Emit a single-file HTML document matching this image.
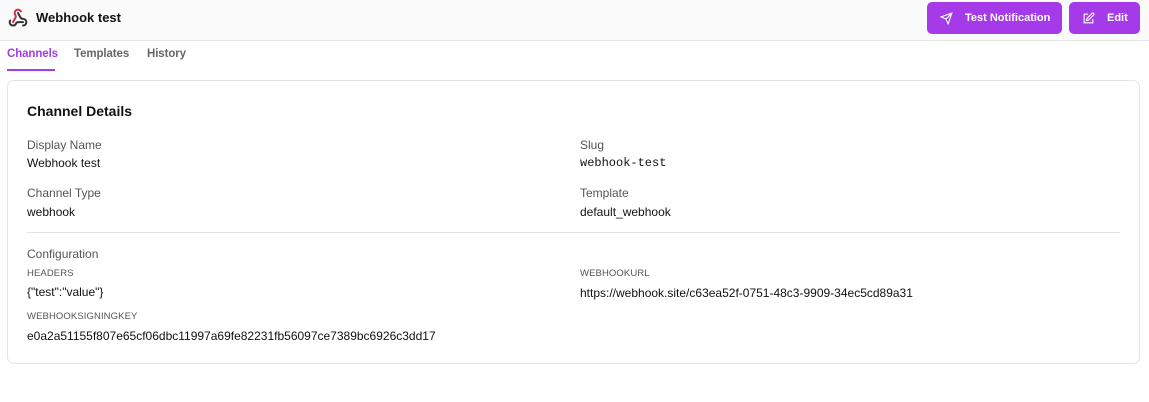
<!DOCTYPE html>
<html><head><meta charset="utf-8"><style>
*{box-sizing:border-box;margin:0;padding:0}
body{width:1149px;height:402px;background:#fff;font-family:"Liberation Sans",sans-serif;color:#111;position:relative;overflow:hidden}
.hdr{position:absolute;left:0;top:0;width:1149px;height:41px;background:#fafafa;border-bottom:1px solid #e5e5e5}
.title{position:absolute;left:36px;top:10px;font-size:13px;font-weight:bold}
.btn{position:absolute;top:2px;height:32px;background:#a43ae8;border-radius:5px;color:#fff;font-size:11px;font-weight:bold;display:flex;align-items:center}
.tab{position:absolute;top:48px;font-size:11.5px;font-weight:bold;color:#666;letter-spacing:-.1px}
.card{position:absolute;left:7px;top:80px;width:1133px;height:284px;border:1px solid #e4e4e7;border-radius:7px}
.t{position:absolute;font-size:12px}
.l{color:#555}
.s{position:absolute;font-size:9.5px;color:#555;letter-spacing:.1px}
.m{font-family:"Liberation Mono",monospace}
</style></head><body>
<div class="hdr">
<svg style="position:absolute;left:8px;top:8px" width="20" height="20" viewBox="0 0 24 24" fill="none" stroke-width="2.4" stroke-linecap="round">
<path d="M18 16.98h-5.99c-1.1 0-1.950.94-2.48 1.9A4 4 0 0 1 2 17c.01-.7.2-1.4.57-2" stroke="#333"/>
<path d="m6 17 3.13-5.78c.53-.97.1-2.18-.5-3.1a4 4 0 1 1 6.89-4.06" stroke="#c7324a"/>
<path d="m12 6 3.13 5.73C15.66 12.7 16.9 13 18 13a4 4 0 0 1 0 8" stroke="#333"/>
</svg>
<div class="title">Webhook test</div>
<div class="btn" style="left:927px;width:135px"><svg style="margin-left:13px" width="13" height="13" viewBox="0 0 24 24" fill="none" stroke="#fff" stroke-width="2"><path d="M22 2 11 13M22 2l-7 20-4-9-9-4z"/></svg><span style="margin-left:12px">Test Notification</span></div>
<div class="btn" style="left:1069px;width:71px"><svg style="margin-left:13px" width="13" height="13" viewBox="0 0 24 24" fill="none" stroke="#fff" stroke-width="2"><path d="M11 4H4v16h16v-7"/><path d="M18.5 2.5a2.1 2.1 0 0 1 3 3L12 15l-4 1 1-4z"/></svg><span style="margin-left:12px">Edit</span></div>
</div>
<div class="tab" style="left:7px;color:#a43ae8">Channels</div>
<div style="position:absolute;left:7px;top:69px;width:48px;height:2px;background:#a43ae8"></div>
<div class="tab" style="left:74px">Templates</div>
<div class="tab" style="left:147px">History</div>
<div class="card"></div>
<div class="t" style="left:27px;top:103px;font-size:14px;font-weight:bold">Channel Details</div>
<div class="t l" style="left:27px;top:138px">Display Name</div>
<div class="t" style="left:27px;top:156px">Webhook test</div>
<div class="t l" style="left:580px;top:138px">Slug</div>
<div class="t m" style="left:580px;top:156px">webhook-test</div>
<div class="t l" style="left:27px;top:186px">Channel Type</div>
<div class="t" style="left:27px;top:205px">webhook</div>
<div class="t l" style="left:580px;top:186px">Template</div>
<div class="t" style="left:580px;top:205px">default_webhook</div>
<div style="position:absolute;left:27px;top:232px;width:1093px;height:1px;background:#e4e4e7"></div>
<div class="t l" style="left:27px;top:247px">Configuration</div>
<div class="s" style="left:27px;top:268px">HEADERS</div>
<div class="t" style="left:27px;top:285px">{"test":"value"}</div>
<div class="s" style="left:580px;top:268px">WEBHOOKURL</div>
<div class="t" style="left:580px;top:286px">https://webhook.site/c63ea52f-0751-48c3-9909-34ec5cd89a31</div>
<div class="s" style="left:27px;top:311px">WEBHOOKSIGNINGKEY</div>
<div class="t" style="left:27px;top:329px">e0a2a51155f807e65cf06dbc11997a69fe82231fb56097ce7389bc6926c3dd17</div>
</body></html>
